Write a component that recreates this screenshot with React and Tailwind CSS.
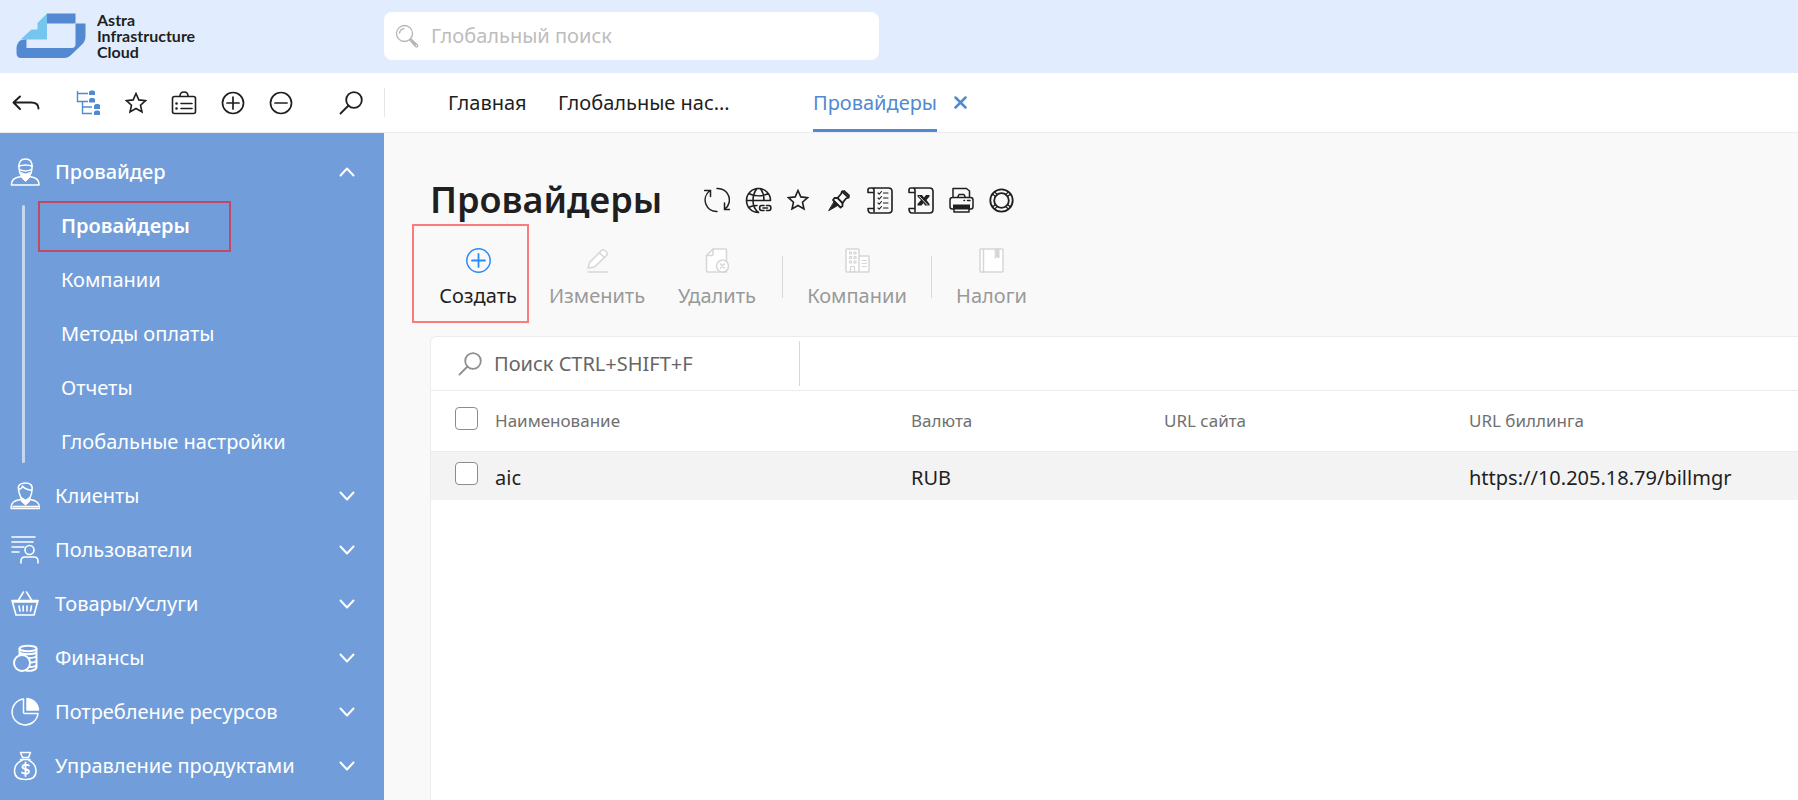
import React from 'react';

function Svg({ w, h, sw = 1.5, children, className = '' }) {
  return (
    <svg width={w} height={h} viewBox={`0 0 ${w} ${h}`} fill="none" stroke="currentColor" strokeWidth={sw}
      strokeLinecap="round" strokeLinejoin="round" className={`shrink-0 ${className}`} aria-hidden="true">
      {children}
    </svg>
  );
}

const Logo = () => (
  <svg width="70" height="46" viewBox="0 0 70 46" className="shrink-0" aria-hidden="true">
    <path d="M31 0.5H59.5V10.5H69.500V23C69.500 27 68 29.500 66 31.500L55 42C53 44 51 45 48 45H5C2 45 0.500 43 0.500 40V35C0.500 32 2 29.500 4 27.500L10.500 26V35H56C58 35 59.500 33.500 59.500 31V10.500H31Z" fill="#5289d1" />
    <path d="M31 .5V26.500H4.500L15.500 16.500H21.500V10Z" fill="#76c5ee" />
    <path d="M58.500 10.500V32L56 34.500" fill="none" stroke="#e1edfe" strokeWidth="1" />
  </svg>
);

const STAR = 'M11 1.500L13.800 7.900L20.600 8.600L15.500 13.200L17 20L11 16.500L5 20L6.500 13.200L1.400 8.600L8.200 7.900Z';
const Star = () => <Svg w={22} h={22} sw={1.6}><path d={STAR} strokeLinejoin="miter" /></Svg>;
const Back = () => <Svg w={28} h={16} sw={2}><path d="M8 1.500L1.500 7.500L8 14M2 7.500H19C24 7.500 26.500 9.500 26.500 13.500" /></Svg>;
const Tree = () => (
  <Svg w={25} h={25} sw={1.4} className="text-[#5289d1]">
    <path d="M1.500 1V11.500H12M1.500 3.500H12M6.500 11.500V23.500H16M6.500 17H16" strokeLinecap="butt" strokeLinejoin="miter" />
    <g fill="currentColor" stroke="none">
      <path d="M13 2l1.500-1.500h3L19 1.500V5h-6z" /><path d="M13 9.500l1.500-1.500h3L19 9v3.500h-6z" />
      <path d="M18 15.500l1.500-1.500h3L24 15v4h-6z" /><path d="M18 22l1.500-1.500h3L24 21.500V25h-6z" />
    </g>
  </Svg>
);
const ListBag = () => (
  <Svg w={26} h={24} sw={1.6}>
    <rect x="1.500" y="5.500" width="23" height="17" rx="2" />
    <path d="M9 5C9 2.500 10.500 1 13 1S17 2.500 17 5M10 12.500H21M10 17.500H21" />
    <path d="M5.500 12.500h.1M5.500 17.500h.1" strokeWidth="2.600" />
  </Svg>
);
const Plus = () => <Svg w={24} h={24} sw={1.7}><circle cx="12" cy="12" r="10.500" /><path d="M6 12H18M12 6V18" /></Svg>;
const Minus = () => <Svg w={24} h={24} sw={1.7}><circle cx="12" cy="12" r="10.500" /><path d="M6 12H18" /></Svg>;
const Search = ({ className }) => <Svg w={24} h={24} sw={1.8} className={className}><circle cx="15" cy="9" r="7.800" /><path d="M9.500 14.500L1.500 22.500" /></Svg>;
const Magnifier = () => (
  <Svg w={24} h={24} sw={1.3} className="text-[#b5b5b5]">
    <circle cx="9.500" cy="9.500" r="8" /><path d="M4.500 9C5 6.500 6.500 5 9 4.700M14.500 15.500L15.500 14.500L22.500 21C23 22.500 22 23.500 20.500 22.500ZM17 17L20.500 20.500" />
  </Svg>
);

/* page title icons */
const Refresh = () => (
  <Svg w={26} h={26} sw={1.5}>
    <path d="M13 1.500A11.500 11.500 0 0 1 21 22M20.500 16V22.500H26M13 24.500A11.500 11.500 0 0 1 5.500 4M0.500 3.500H6.500V9.500" strokeLinejoin="miter" />
  </Svg>
);
const Globe = () => (
  <Svg w={27} h={27} sw={1.6}>
    <path d="M13.500 25.500A12 12 0 1 1 25.500 13.500M13.500 25.500C9 22 8 18 8 13.500S9.500 4.500 12 1.500M15 1.500C18 4.500 19 9 19 13.500M3.500 6.500C9.500 9.500 17.500 9.500 23.500 6.500M1.500 13.500H25M3.500 20.500C6 19 9 18.500 12 18.500" />
    <path d="M19 18.500H16.500C14 18.500 14 23.500 16.500 23.500H19M21.500 18.500H24C26.500 18.500 26.500 23.500 24 23.500H21.500M18 21H22.500" />
  </Svg>
);
const Pin = () => (
  <Svg w={28} h={26} sw={1.8}>
    <path d="M18 4.500L20 4L25 8.500L24.500 10.500L22 11.500L18.500 16L18.500 19L16.500 20.500L9 13L10.500 11L13.500 11L17 7Z" />
    <path d="M18 4.500L24.500 10.500M13.500 11L18.500 16" strokeWidth="1.800" />
    <path d="M10.500 14.500L14.500 18L5 23.500Z" fill="currentColor" strokeWidth="1" />
  </Svg>
);
const Scroll = ({ children }) => (
  <Svg w={26} h={27} sw={1.6}>
    <path d="M7 5.500H1V3C1 1.800 2 1 3 1H21.500C23.500 1 25 2.500 25 4.500V22.500C25 24.500 23.500 26 21.500 26H4C2 26 1 24.500 1 21.500H7V24.500M7 21.500V3.500C7 2 6 1 5 1" />
    {children}
  </Svg>
);
const Checklist = () => (
  <Scroll>
    <path strokeWidth="1.100" d="M11 6l1.200 1.200L14.500 4.500M11 11l1.200 1.200L14.500 9.500M11 16l1.200 1.200L14.500 14.500M11 21l1.200 1.200L14.500 19.500M16.500 6H21M16.500 11H21M16.500 16H21M16.500 21H21" />
  </Scroll>
);
const Excel = () => (
  <Scroll>
    <path d="M9.500 8H14L16 10.500L18 8H21.500V9.500L18.500 13L21.500 17V18.500H17L15.500 16L13.500 18.500H9.500V17L13 13L9.500 9.500Z" fill="currentColor" stroke="none" />
    <path d="M11.500 9.500L19.500 18" stroke="#f9f9f9" strokeWidth="0.900" />
  </Scroll>
);
const Printer = () => (
  <Svg w={25} h={26} sw={1.500}>
    <path d="M4 10.500V1.500H17.500L20.500 4V10.500M8.500 10.500L10 7.500H15L16.500 10.500M5 22H3C1.500 22 1 21 1 19.500V13C1 11.500 2 10.500 3.500 10.500H21.500C23 10.500 24 11.500 24 13V19.500C24 21 23.500 22 22 22H20M5 19V25H20V19M15 13.500h.5M18.500 13.500H21" />
    <path d="M4 17.500H21V22.500H4Z" fill="currentColor" stroke="none" />
  </Svg>
);
const Lifebuoy = () => (
  <Svg w={25} h={25} sw={1.800}>
    <circle cx="12.500" cy="12.500" r="11.200" /><circle cx="12.500" cy="12.500" r="7.300" />
    <path d="M3.500 6L6.500 8.500M5.500 4L8.500 6.500M21.500 6L18.500 8.500M19.500 4L16.500 6.500M3.500 19L6.500 16.500M5.500 21L8.500 18.500M21.500 19L18.500 16.500M19.500 21L16.500 18.500" strokeWidth="1.200" />
  </Svg>
);

/* action icons */
const Create = () => <Svg w={25} h={25} sw={1.500} className="text-[#2a8bfd]"><circle cx="12.500" cy="12.500" r="11.700" /><path d="M6 12.500H19M12.500 6V19" strokeWidth="1.800" /></Svg>;
const Edit = () => (
  <Svg w={25} h={25} className="text-[#d6d6d6]">
    <path d="M3 20L4.500 14.500L16.500 2.500C18.500 0 24 4.500 21.500 7.500L9.500 19Z" fill="#fff" /><path d="M14.500 5L19.500 9.500M3 24H22" />
  </Svg>
);
const Delete = () => (
  <Svg w={25} h={25} className="text-[#d6d6d6]">
    <path d="M8 1H20Q21.500 1 21.500 2.500V24H3Q1.500 24 1.500 22.500V7.500Z" fill="#fff" /><path d="M1.500 7.500H6.500Q8 7.500 8 6V1" />
    <circle cx="17.500" cy="18" r="6" fill="#fff" /><path d="M15.500 16L19.500 20M19.500 16L15.500 20" />
  </Svg>
);
const Building = () => (
  <Svg w={25} h={25} className="text-[#d6d6d6]">
    <path d="M14 24H2Q1 24 1 23V2Q1 1 2 1H13Q14 1 14 2ZM14 8H23Q24 8 24 9V23Q24 24 23 24H14Z" fill="#fff" />
    <path strokeWidth="1.200" d="M4.500 4h2v2h-2zM9 4h2v2h-2zM4.500 8.500h2v2h-2zM9 8.500h2v2h-2zM4.500 13h2v2h-2zM9 13h2v2h-2zM5.500 24V18.500H9.500V24M17 12.500H21.500M17 15.500H21.500M17 18.500H21.500" />
  </Svg>
);
const Book = () => (
  <Svg w={25} h={25} className="text-[#d6d6d6]">
    <rect x="1" y="1" width="23" height="23" rx="1" fill="#fff" /><path d="M4.500 1V24" /><path d="M16.500 1H20V10L18.200 8.500L16.500 10Z" fill="currentColor" strokeWidth="1" />
  </Svg>
);

/* sidebar icons */
const Provider = () => (
  <Svg w={30} h={30}>
    <path d="M9 11C8.500 4.500 11 2 15.500 2S22.500 4.500 22 11C22 15 20.500 18 19 20M9 11C9 15 10.500 18 12 20M8.500 9.500C12 7.500 19 7.500 22.500 9.500M9 12C12 14.500 19 14.500 22 12" />
    <path d="M11 15C13 17.500 18 17.500 20 15L19 21L15.500 24.500L12 21Z" fill="currentColor" strokeWidth="1" />
    <path d="M11.500 19.500C5 20.500 1.500 22 1.500 28H29C29 22 25.500 20.500 19.500 19.500" />
  </Svg>
);
const Client = () => (
  <Svg w={30} h={30}>
    <path d="M8.500 8C7.500 4 11 2 15.500 2S23 4 22 9C22 13 20 15.500 19.500 18.500M8.500 8C8.500 12.500 11 15.500 11.500 18.500M8.500 7.500C10 9.500 13 5.500 12.500 5C14.500 8 19 9 22 9.500" />
    <path d="M11.500 16.500L15.500 19L19.500 16.500V20.500L15.500 24L11.500 20.500Z" fill="currentColor" strokeWidth="1" />
    <path d="M11 18.500C4.500 19.500 1 21 1 27.500H29.500C29.500 21 26 19.500 20 18.500M3 25.500H28" strokeWidth="1.300" />
  </Svg>
);
const Users = () => (
  <Svg w={30} h={30} sw={1.600}>
    <path d="M2 2H25M2 7H23M2 12H14M2 17H9" /><circle cx="19.500" cy="15" r="4.500" /><path d="M11 28V26Q11 22 15 22H24Q28 22 28 26V28" />
  </Svg>
);
const Basket = () => (
  <Svg w={30} h={30} sw={1.600}>
    <path d="M2 11.500H28L24 26H6L2 11.500M3 13L27 13M8.500 11L13.500 3M21.500 11L16.500 3M9 17L10 22M13.200 17V22M17 17V22M21.500 17L20.500 22" />
  </Svg>
);
const Finance = () => (
  <Svg w={30} h={30} sw={1.900}>
    <ellipse cx="18" cy="5.500" rx="8.500" ry="2.800" /><circle cx="12" cy="20" r="8" />
    <path d="M9.500 5.500V12M26.500 5.500V24C26.500 27 21 28.500 16 27.500M9.500 9C11 12 25 12 26.500 9M18.500 15C22 15 25.500 14.500 26.500 13M20.500 19.500C23 19.500 25.500 19 26.500 17.500M19.500 24C22 24 25.500 23.500 26.500 22" />
  </Svg>
);
const Pie = () => (
  <Svg w={30} h={30} sw={1.500}>
    <path d="M13.500 2A13 13 0 1 0 28 16.500H14.500Q13.500 16.500 13.500 15.500Z" /><path d="M17 1.500A12.500 12.500 0 0 1 28.500 13H17Z" fill="currentColor" />
  </Svg>
);
const Money = () => (
  <Svg w={30} h={30} sw={1.500}>
    <path d="M10.500 1.500H20.500L18.500 6.500H12.500ZM10.500 8.500H20M12.500 9C8 11 4.500 15 4.500 20C4.500 26 9 28.500 15.500 28.500S26 26 26 20C26 15 22.500 11 18.500 9" />
    <path d="M19 14.500C17 13 12.500 13.500 12.500 16C12.500 19 19 17.500 19 20.500C19 23 14.500 23.500 12 21.500M15.500 11.500V25" strokeWidth="1.800" />
  </Svg>
);
const Chevron = ({ up }) => <Svg w={16} h={10} sw={2} className="mr-[29px]"><path d={up ? 'M1.500 8.500L8 1.500L14.500 8.500' : 'M1.500 1.500L8 8.500L14.500 1.500'} /></Svg>;

const subItems = ['Провайдеры', 'Компании', 'Методы оплаты', 'Отчеты', 'Глобальные настройки'];
const sections = [
  [Client, 'Клиенты'], [Users, 'Пользователи'], [Basket, 'Товары/Услуги'],
  [Finance, 'Финансы'], [Pie, 'Потребление ресурсов'], [Money, 'Управление продуктами'],
];

function Section({ icon: Icon, label, open }) {
  return (
    <button type="button" aria-expanded={!!open} className={`flex h-[54px] w-full items-center pl-[10px] text-left ${open ? 'font-medium' : ''}`}>
      <Icon />
      <span className="ml-[15px] flex-1 whitespace-nowrap">{label}</span>
      <Chevron up={open} />
    </button>
  );
}

const titleIcons = [
  [Refresh, 'Обновить'], [Globe, 'Ссылка'], [Star, 'Избранное'], [Pin, 'Закрепить'],
  [Checklist, 'Список'], [Excel, 'Excel'], [Printer, 'Печать'], [Lifebuoy, 'Помощь'],
];

const Check = ({ label }) => (
  <input type="checkbox" aria-label={label} className="block size-[23px] appearance-none rounded-[4px] border border-[#8c8c8c] bg-white" />
);

export default function App() {
  return (
    <div className="flex h-screen flex-col overflow-hidden bg-[#f9f9f9] font-['Noto_Sans',sans-serif] text-[20px] leading-6 text-[#1f1f1f]">
      <header className="flex h-[73px] shrink-0 items-center bg-[#e1edfe] pb-0.5">
        <a href="#" className="flex w-96 shrink-0 items-center gap-[11px] pl-4 font-['Lato',sans-serif] text-[16px] font-bold leading-4">
          <Logo />
          <span>Astra<br />Infrastructure<br />Cloud</span>
        </a>
        <label className="flex h-12 w-[495px] items-center gap-3 rounded-lg bg-white pl-[11px]">
          <Magnifier />
          <input type="search" aria-label="Глобальный поиск" placeholder="Глобальный поиск" className="min-w-0 flex-1 bg-transparent outline-none placeholder:text-[#bdbdbd]" />
        </label>
      </header>

      <div className="flex h-[60px] shrink-0 border-b border-[#ececec] bg-white">
        <div className="flex w-96 shrink-0 items-center pl-3">
          <button type="button" aria-label="Назад" className="mr-9"><Back /></button>
          <div className="flex items-center gap-6">
            <button type="button" aria-label="Дерево"><Tree /></button>
            <button type="button" aria-label="Избранное"><Star /></button>
            <button type="button" aria-label="Список"><ListBag /></button>
            <button type="button" aria-label="Развернуть"><Plus /></button>
            <button type="button" aria-label="Свернуть"><Minus /></button>
          </div>
          <button type="button" aria-label="Поиск" className="ml-[46px]"><Search /></button>
        </div>
        <nav className="flex min-w-0 flex-1 items-center">
          <span className="h-[29px] w-px shrink-0 bg-[#e6e6e6]" />
          <a href="#" className="ml-[63px] w-[110px] shrink-0">Главная</a>
          <a href="#" title="Глобальные настройки" className="mr-[65px] w-[190px] shrink-0 whitespace-nowrap">Глобальные нас…</a>
          <a href="#" className="flex h-full items-center border-b-[3px] border-[#5289d1] pt-[3px] text-[#5289d1]">Провайдеры</a>
          <button type="button" aria-label="Закрыть" className="ml-[17px] text-[#5289d1]">
            <Svg w={13} h={13} sw={2.500}><path d="M1.500 1.500L11.500 11.500M11.500 1.500L1.500 11.500" /></Svg>
          </button>
        </nav>
      </div>

      <div className="flex min-h-0 flex-1">
        <aside className="w-96 shrink-0 overflow-hidden bg-[#719eda] pt-3 text-white">
          <Section icon={Provider} label="Провайдер" open />
          <ul className="relative">
            <li aria-hidden="true" className="absolute inset-y-[6px] left-[22px] w-[3px] rounded bg-[#c6d8f0]" />
            {subItems.map((t, i) => (
              <li key={t} className="flex h-[54px] items-center pl-[38px]">
                <a href="#" className={`flex h-[51px] min-w-[193px] items-center whitespace-nowrap border-2 pl-[21px] ${i === 0 ? 'border-[#bd4a66] font-semibold' : 'border-transparent'}`}>{t}</a>
              </li>
            ))}
          </ul>
          {sections.map(([I, t]) => <Section key={t} icon={I} label={t} />)}
        </aside>

        <main className="flex min-w-0 flex-1 flex-col pt-[43px] pl-[46px]">
          <div className="flex h-12 shrink-0 items-center">
            <h1 className="min-w-[274px] text-[36px] leading-[48px] font-semibold">Провайдеры</h1>
            <div className="flex items-center gap-[15px]">
              {titleIcons.map(([I, l]) => <button key={l} type="button" aria-label={l}><I /></button>)}
            </div>
          </div>

          <div className="flex h-28 shrink-0 items-start gap-6 pl-2 whitespace-nowrap text-[#999]">
            <button type="button" className="relative mt-6 mr-[6px] flex w-20 flex-col items-center gap-[11px] text-[#1f1f1f]">
              <span className="absolute top-[-24px] right-[-11px] left-[-26px] h-[99px] border-2 border-[#fb7b7b]" />
              <Create />Создать
            </button>
            <button type="button" disabled className="mt-6 mr-[6px] flex w-[98px] flex-col items-center gap-[11px]"><Edit />Изменить</button>
            <button type="button" disabled className="mt-6 flex w-[82px] flex-col items-center gap-[11px]"><Delete />Удалить</button>
            <span className="mt-8 h-[42px] w-px bg-[#d9d9d9]" />
            <button type="button" disabled className="mt-6 flex w-[100px] flex-col items-center gap-[11px]"><Building />Компании</button>
            <span className="mt-8 h-[42px] w-px bg-[#d9d9d9]" />
            <button type="button" disabled className="mt-6 flex w-[71px] flex-col items-center gap-[11px]"><Book />Налоги</button>
          </div>

          <section className="min-h-0 flex-1 rounded-tl-md border-t border-l border-[#ececec] bg-white">
            <div className="flex h-[54px] items-center border-b border-[#ececec]">
              <label className="flex h-[45px] w-[369px] items-center gap-3 border-r border-[#d6d6d6] pl-[27px]">
                <Search className="text-[#8f8f8f]" />
                <input type="text" aria-label="Поиск" placeholder="Поиск CTRL+SHIFT+F" className="min-w-0 flex-1 bg-transparent outline-none placeholder:text-[#666]" />
              </label>
            </div>
            <table className="w-full table-fixed border-collapse text-left">
              <colgroup><col className="w-16" /><col className="w-[416px]" /><col className="w-[253px]" /><col className="w-[305px]" /><col /></colgroup>
              <thead>
                <tr className="h-[60px] border-b border-[#ececec] text-[17px] text-[#707070]">
                  <th className="pb-1 pl-6"><Check label="Выбрать все" /></th>
                  <th className="font-normal">Наименование</th>
                  <th className="font-normal">Валюта</th>
                  <th className="font-normal">URL сайта</th>
                  <th className="font-normal">URL биллинга</th>
                </tr>
              </thead>
              <tbody>
                <tr className="h-[49px] bg-[#f3f3f3]">
                  <td className="pb-1 pl-6"><Check label="Выбрать aic" /></td>
                  <td className="pt-1">aic</td>
                  <td className="pt-1">RUB</td>
                  <td />
                  <td className="pt-1">https://10.205.18.79/billmgr</td>
                </tr>
              </tbody>
            </table>
          </section>
        </main>
      </div>
    </div>
  );
}
